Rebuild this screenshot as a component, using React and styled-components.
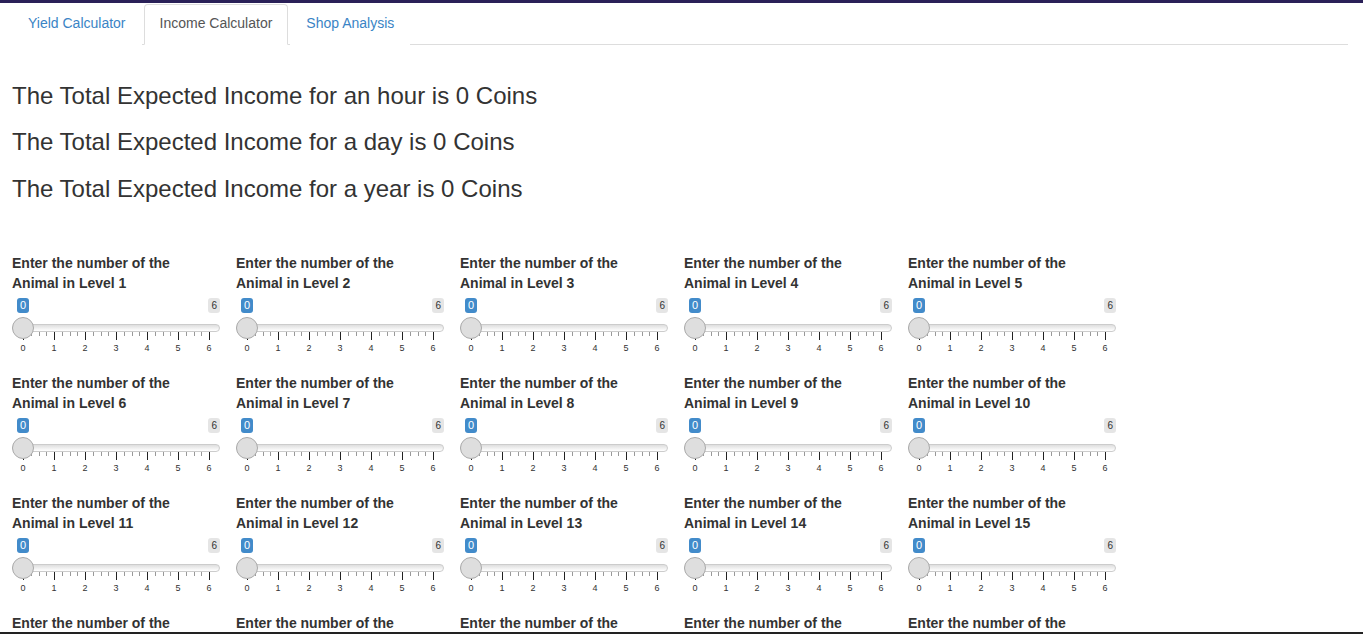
import React from 'react'
import styled, { createGlobalStyle } from 'styled-components'

const Global = createGlobalStyle`
  html, body {
    margin: 0;
    padding: 0;
    background: #fff;
  }
  body {
    font-family: "Liberation Sans", Arial, Helvetica, sans-serif;
    font-size: 14px;
    line-height: 1.42857;
    color: #333;
  }
  * { box-sizing: border-box; }
`

const Page = styled.div`
  height: 100vh;
  overflow: hidden;
  border-top: 3px solid #2a2058;
  border-bottom: 2px solid #222;
  padding: 1px 15px 0 12px;
`

const Tabs = styled.ul`
  display: flex;
  list-style: none;
  margin: 0;
  padding: 0;
  border-bottom: 1px solid #ddd;
`

const Tab = styled.li`
  margin-bottom: -1px;
  a {
    display: block;
    margin-right: 2px;
    padding: 8px 15px 11px;
    line-height: 20px;
    border: 1px solid ${p => (p.$active ? '#ddd' : 'transparent')};
    border-bottom-color: ${p => (p.$active ? '#fff' : 'transparent')};
    border-radius: 4px 4px 0 0;
    background: #fff;
    color: ${p => (p.$active ? '#555' : '#3a84c5')};
    text-decoration: none;
    cursor: ${p => (p.$active ? 'default' : 'pointer')};
  }
`

const Results = styled.section`
  display: flow-root;
  padding-top: 18px;
  h3 {
    font-size: 24px;
    font-weight: 400;
    line-height: 1.1;
    margin: 20px 0 10px;
    color: #333;
  }
`

const Grid = styled.div`
  display: grid;
  grid-template-columns: repeat(5, 208px);
  column-gap: 16px;
  margin-top: 41px;
`

const Field = styled.div`
  margin-bottom: 15px;
`

const Label = styled.label`
  display: block;
  font-weight: 700;
  line-height: 20px;
  margin-bottom: 5px;
`

const Slider = styled.div`
  width: 208px;
  height: 60px;
`

const BadgeRow = styled.div`
  display: flex;
  justify-content: space-between;
  align-items: flex-start;
`

const Badge = styled.span`
  display: block;
  padding: 1px 3px;
  border-radius: 3px;
  font-size: ${p => (p.$value ? '11px' : '10px')};
  line-height: 13px;
  color: ${p => (p.$value ? '#fff' : '#333')};
  background: ${p => (p.$value ? '#428bca' : 'rgba(0, 0, 0, 0.1)')};
  margin-left: ${p => (p.$value ? '5px' : '0')};
`

const Track = styled.div`
  position: relative;
  height: 8px;
  margin-top: 11px;
  border: 1px solid #ccc;
  border-radius: 16px;
  background: linear-gradient(to bottom, #dedede, #fff);
`

const Handle = styled.span`
  position: absolute;
  left: -1px;
  top: -8px;
  width: 22px;
  height: 22px;
  border: 1px solid #aaa;
  border-radius: 50%;
  background: #dedede;
`

const Ticks = styled.svg`
  display: block;
`

const Numbers = styled.div`
  display: flex;
  margin: 3px 0 0 -4.5px;
  span {
    flex: 0 0 31px;
    text-align: center;
    font-size: 9px;
    line-height: 10px;
    color: #333;
  }
`

const TickMarks = () => {
  const lines = []
  for (let i = 0; i <= 24; i++) {
    const x = Math.round(11 + i * 7.75) + 0.5
    const big = i % 4 === 0
    lines.push(
      <line
        key={i}
        x1={x}
        x2={x}
        y1="0"
        y2={big ? 8 : 4}
        stroke={big ? '#222' : '#999'}
        strokeWidth="1"
      />
    )
  }
  return (
    <Ticks width="208" height="8" viewBox="0 0 208 8">
      {lines}
    </Ticks>
  )
}

const AnimalSlider = ({ level }) => (
  <Field>
    <Label>
      Enter the number of the
      <br />
      Animal in Level {level}
    </Label>
    <Slider>
      <BadgeRow>
        <Badge $value>0</Badge>
        <Badge>6</Badge>
      </BadgeRow>
      <Track>
        <Handle />
      </Track>
      <TickMarks />
      <Numbers>
        {[0, 1, 2, 3, 4, 5, 6].map(n => (
          <span key={n}>{n}</span>
        ))}
      </Numbers>
    </Slider>
  </Field>
)

const levels = Array.from({ length: 20 }, (_, i) => i + 1)

const App = () => {
  return (
    <Page>
      <Global />
      <Tabs>
        <Tab><a>Yield Calculator</a></Tab>
        <Tab $active><a>Income Calculator</a></Tab>
        <Tab><a>Shop Analysis</a></Tab>
      </Tabs>
      <Results>
        <h3>The Total Expected Income for an hour is 0 Coins</h3>
        <h3>The Total Expected Income for a day is 0 Coins</h3>
        <h3>The Total Expected Income for a year is 0 Coins</h3>
      </Results>
      <Grid>
        {levels.map(l => (
          <AnimalSlider key={l} level={l} />
        ))}
      </Grid>
    </Page>
  )
}

export default App
